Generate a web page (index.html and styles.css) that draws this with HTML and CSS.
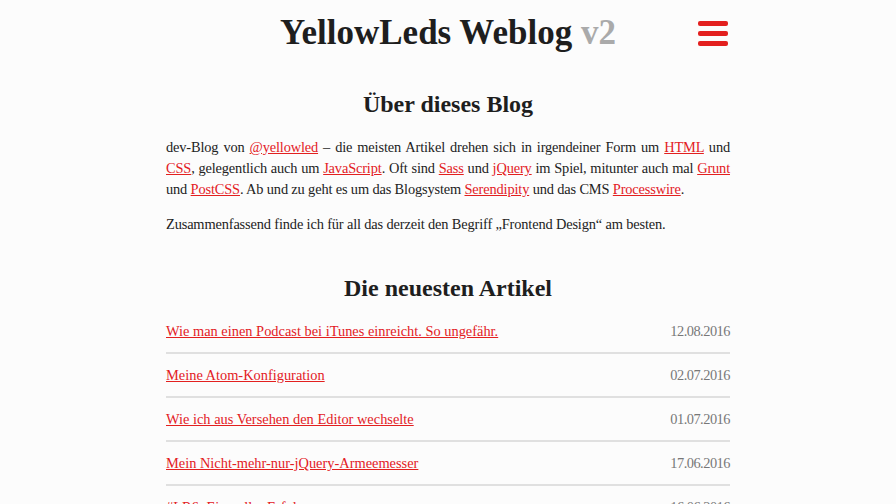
FILE: index.html
```html
<!DOCTYPE html>
<html lang="de">
<head>
<meta charset="utf-8">
<title>YellowLeds Weblog v2</title>
<link rel="stylesheet" href="styles.css">
</head>
<body>
<div class="page">
  <header class="site-header">
    <div class="spacer"></div>
    <h1 class="site-title">YellowLeds Weblog <span class="version">v2</span></h1>
    <button class="menu-btn" aria-label="Menü">
      <span class="bar"></span><span class="bar"></span><span class="bar"></span>
    </button>
  </header>

  <section class="about">
    <h2 class="section-title">Über dieses Blog</h2>
    <p>dev-Blog von <a href="#">@yellowled</a> – die meisten Artikel drehen sich in irgendeiner Form um <a href="#">HTML</a> und <a href="#">CSS</a>, gelegentlich auch um <a href="#">JavaScript</a>. Oft sind <a href="#">Sass</a> und <a href="#">jQuery</a> im Spiel, mitunter auch mal <a href="#">Grunt</a> und <a href="#">PostCSS</a>. Ab und zu geht es um das Blogsystem <a href="#">Serendipity</a> und das CMS <a href="#">Processwire</a>.</p>
    <p>Zusammenfassend finde ich für all das derzeit den Begriff „Frontend Design“ am besten.</p>
  </section>

  <section class="latest">
    <h2 class="section-title">Die neuesten Artikel</h2>
    <ul class="post-list">
      <li class="post"><a href="#">Wie man einen Podcast bei iTunes einreicht. So ungefähr.</a><time>12.08.2016</time></li>
      <li class="post"><a href="#">Meine Atom-Konfiguration</a><time>02.07.2016</time></li>
      <li class="post"><a href="#">Wie ich aus Versehen den Editor wechselte</a><time>01.07.2016</time></li>
      <li class="post"><a href="#">Mein Nicht-mehr-nur-jQuery-Armeemesser</a><time>17.06.2016</time></li>
      <li class="post"><a href="#">#LR6: Ein voller Erfolg</a><time>16.06.2016</time></li>
    </ul>
  </section>
</div>
</body>
</html>
```

FILE: styles.css
```css
html, body {
  margin: 0;
  padding: 0;
  background: #fcfcfc;
}
body {
  font-family: "Liberation Serif", "Times New Roman", serif;
  color: #222;
  font-size: 15px;
  line-height: 21px;
}
.page {
  width: 564px;
  margin: 0 auto;
}
.site-header {
  display: grid;
  grid-template-columns: 1fr auto 1fr;
  align-items: center;
  padding-top: 11px;
  height: 44px;
}
.site-title {
  margin: 0;
  font-size: 35px;
  line-height: 44px;
  font-weight: bold;
  color: #1e1e1e;
  white-space: nowrap;
}
.version {
  color: #aaa;
}
.menu-btn {
  justify-self: end;
  display: flex;
  flex-direction: column;
  gap: 5px;
  padding: 0;
  margin: 0 2px 0 0;
  border: 0;
  background: none;
  width: 30px;
}
.bar {
  display: block;
  height: 5px;
  border-radius: 2px;
  background: #e3201f;
}
.about {
  padding-top: 34px;
}
.section-title {
  margin: 0 0 18px;
  text-align: center;
  font-size: 24px;
  line-height: 30px;
  font-weight: bold;
  color: #1e1e1e;
}
.about p {
  margin: 0 0 14px;
  font-size: 14.4px;
  letter-spacing: -0.15px;
  text-align: justify;
}
a {
  color: #e3201f;
  text-decoration: underline;
}
.latest {
  padding-top: 24px;
}
.latest .section-title {
  margin-bottom: 7px;
}
.post-list {
  list-style: none;
  margin: 0;
  padding: 0;
}
.post {
  display: flex;
  justify-content: space-between;
  align-items: baseline;
  padding: 11px 0 10px;
  font-size: 14.4px;
  border-bottom: 2px solid #e0e0e0;
}
.post time {
  color: #777;
  letter-spacing: -0.5px;
}
```
